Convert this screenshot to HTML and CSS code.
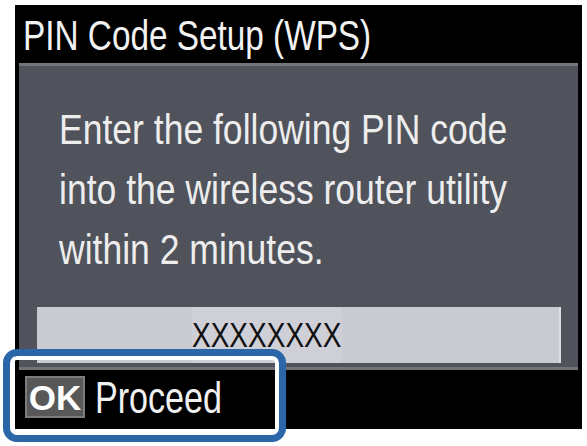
FILE: index.html
```html
<!DOCTYPE html>
<html lang="en">
<head>
<meta charset="utf-8">
<title>PIN Code Setup (WPS)</title>
<link rel="stylesheet" href="styles.css">
</head>
<body>
<div class="screen">
  <div class="title"><span class="title-text">PIN Code Setup (WPS)</span></div>
  <div class="panel">
    <div class="msg">
      <div class="line">Enter the following PIN code</div>
      <div class="line">into the wireless router utility</div>
      <div class="line">within 2 minutes.</div>
    </div>
    <div class="pin"><span class="pin-text">XXXXXXXX</span></div>
  </div>
  <div class="footer">
    <span class="ok">OK</span>
    <span class="proceed">Proceed</span>
  </div>
</div>
<div class="frame"></div>
</body>
</html>
```
FILE: styles.css
```css
html, body {
  margin: 0;
  padding: 0;
  background: #ffffff;
}
body {
  position: relative;
  width: 587px;
  height: 446px;
  overflow: hidden;
  font-family: "Liberation Sans", Arial, sans-serif;
}
.screen {
  margin: 5px 0 0 15px;
  width: 567px;
  height: 424px;
  background: #000000;
  display: flex;
  flex-direction: column;
}
.title {
  height: 58px;
  line-height: 58px;
  padding-left: 8px;
  padding-top: 1px;
  box-sizing: border-box;
  white-space: nowrap;
}
.title-text {
  display: inline-block;
  font-size: 43px;
  color: #f2f2f2;
  transform: scaleX(0.775);
  transform-origin: left center;
}
.panel {
  margin: 0 4px;
  background: #50535b;
  border-top: 3px solid #74767c;
  border-bottom: 3px solid #72747a;
  padding: 33px 0 4px 0;
  display: flex;
  flex-direction: column;
}
.msg {
  margin-left: 40px;
  font-size: 43px;
  line-height: 60px;
  color: #ededed;
  white-space: nowrap;
  transform: scaleX(0.826);
  transform-origin: left center;
}
.pin {
  margin: 28px 17px 0 18px;
  height: 56px;
  background: #c9cad2;
  border-right: 2px solid #dcdde2;
  line-height: 56px;
  padding-left: 155px;
}
.pin-text {
  display: inline-block;
  font-size: 35px;
  color: #111111;
  background: #cfd0d7;
  transform: scaleX(0.80);
  transform-origin: left center;
}
.footer {
  flex: 1;
  display: flex;
  align-items: flex-start;
  padding: 6px 0 0 10px;
}
.ok {
  width: 56px;
  height: 38px;
  background: #585858;
  border: 2px solid #7c7c7c;
  color: #ffffff;
  font-weight: bold;
  font-size: 35px;
  line-height: 40px;
  text-align: center;
}
.proceed {
  display: inline-block;
  margin-left: 10px;
  font-size: 44px;
  line-height: 44px;
  color: #f0f0f0;
  transform: scaleX(0.775);
  transform-origin: left center;
}
.frame {
  position: absolute;
  left: 3px;
  top: 349px;
  width: 283px;
  height: 93px;
  box-sizing: border-box;
  border: 7px solid #2a66a8;
  border-radius: 14px;
  box-shadow: inset 0 0 0 4px #ffffff;
}
```
